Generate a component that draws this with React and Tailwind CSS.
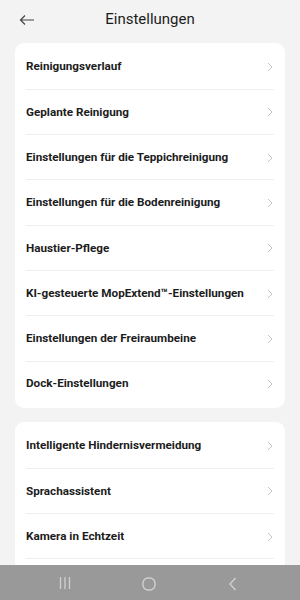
import React from 'react'

const groupOne = [
  'Reinigungsverlauf',
  'Geplante Reinigung',
  'Einstellungen für die Teppichreinigung',
  'Einstellungen für die Bodenreinigung',
  'Haustier-Pflege',
  'KI-gesteuerte MopExtend™-Einstellungen',
  'Einstellungen der Freiraumbeine',
  'Dock-Einstellungen',
]

const groupTwo = [
  'Intelligente Hindernisvermeidung',
  'Sprachassistent',
  'Kamera in Echtzeit',
  'Weitere Einstellungen',
]

const Chevron = () => (
  <svg width="6" height="10" viewBox="0 0 6 10" fill="none">
    <path d="M1 1l4 4-4 4" stroke="#c4c4c4" strokeWidth="1" />
  </svg>
)

const Row = ({ label, last }) => (
  <div className="mx-[11px] h-[45.3px] flex items-center justify-between relative">
    <span className="text-[11.7px] font-bold text-[#1c1c1c]">{label}</span>
    <span className="mr-[1px]"><Chevron /></span>
    {!last && <div className="absolute left-0 right-0 bottom-0 h-px bg-[#efefef]" />}
  </div>
)

const Card = ({ items }) => (
  <div className="bg-white rounded-[9px] pt-[1.5px] pb-[1px]">
    {items.map((item, i) => (
      <Row key={item} label={item} last={i === items.length - 1} />
    ))}
  </div>
)

export default function App() {
  return (
    <div
      className="w-[300px] h-[600px] bg-[#f3f3f3] relative overflow-hidden flex flex-col"
      style={{ fontFamily: 'Roboto, "Noto Sans", sans-serif' }}
    >
      {/* header */}
      <div className="h-[43px] flex items-center relative shrink-0">
        <svg className="absolute left-[19px] top-[14px]" width="16" height="12" viewBox="0 0 16 12" fill="none">
          <path d="M15 6H1.5M6 1.5L1.5 6l4.5 4.5" stroke="#444" strokeWidth="1.2" />
        </svg>
        <div className="w-full text-center text-[15px] text-[#1c1c1c] -mt-[4px]">Einstellungen</div>
      </div>

      <div className="px-[15px] flex flex-col gap-[14px]">
        <Card items={groupOne} />
        <Card items={groupTwo} />
      </div>

      {/* android nav bar */}
      <div className="absolute left-0 right-0 bottom-0 h-[35px] bg-[#999999]">
        <svg className="absolute left-[59px] top-[12px]" width="12" height="12" viewBox="0 0 12 12" fill="none">
          <path d="M1.5 0v12M6 0v12M10.5 0v12" stroke="#d0d0d0" strokeWidth="1.3" />
        </svg>
        <svg className="absolute left-[142px] top-[12px]" width="14" height="14" viewBox="0 0 14 14" fill="none">
          <rect x="1" y="1" width="12" height="12" rx="5" stroke="#d0d0d0" strokeWidth="1.4" />
        </svg>
        <svg className="absolute left-[228px] top-[12px]" width="9" height="14" viewBox="0 0 9 14" fill="none">
          <path d="M7.5 1L2 7l5.5 6" stroke="#d0d0d0" strokeWidth="1.4" />
        </svg>
      </div>
    </div>
  )
}
